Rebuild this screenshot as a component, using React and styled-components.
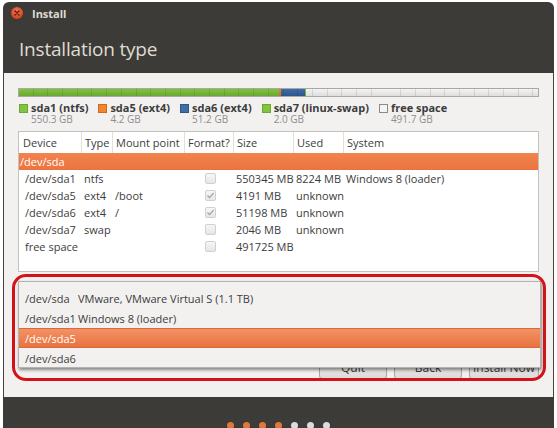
import React from "react";
import styled, { createGlobalStyle } from "styled-components";

const GlobalStyle = createGlobalStyle`
  html, body {
    margin: 0;
    padding: 0;
    background: #ffffff;
  }
  body {
    font-family: "Open Sans", "DejaVu Sans", sans-serif;
    color: #3c3c3c;
  }
`;

const segments = [
  { name: "sda1 (ntfs)", size: "550.3 GB", gb: 550.3, color: "#82c341", edge: "#6aa832" },
  { name: "sda5 (ext4)", size: "4.2 GB", gb: 4.2, color: "#f0852d", edge: "#d06a1a" },
  { name: "sda6 (ext4)", size: "51.2 GB", gb: 51.2, color: "#3f6ea8", edge: "#2d568a" },
  { name: "sda7 (linux-swap)", size: "2.0 GB", gb: 2.0, color: "#82c341", edge: "#6aa832" },
  { name: "free space", size: "491.7 GB", gb: 491.7, color: "#f4f4f4", edge: "#8a8a8a", free: true },
];

const columns = ["Device", "Type", "Mount point", "Format?", "Size", "Used", "System"];

const partitions = [
  { dev: "/dev/sda1", type: "ntfs", mount: "", format: false, size: "550345 MB", used: "8224 MB", system: "Windows 8 (loader)" },
  { dev: "/dev/sda5", type: "ext4", mount: "/boot", format: true, size: "4191 MB", used: "unknown", system: "" },
  { dev: "/dev/sda6", type: "ext4", mount: "/", format: true, size: "51198 MB", used: "unknown", system: "" },
  { dev: "/dev/sda7", type: "swap", mount: "", format: false, size: "2046 MB", used: "unknown", system: "" },
  { dev: "free space", type: "", mount: "", format: false, size: "491725 MB", used: "", system: "" },
];

const bootDevices = [
  { dev: "/dev/sda", label: "VMware, VMware Virtual S (1.1 TB)" },
  { dev: "/dev/sda1", label: "Windows 8 (loader)" },
  { dev: "/dev/sda5", label: "", selected: true },
  { dev: "/dev/sda6", label: "" },
];

const Window = styled.div`
  position: relative;
  width: 551px;
  height: 426px;
  margin: 2px 0 0 3px;
  overflow: hidden;
  display: flex;
  flex-direction: column;
  background: #f2f1f0;
  border-radius: 6px 6px 0 0;
`;

const Header = styled.header`
  height: 71px;
  flex: none;
  background: #3c3b37;
  padding-left: 8px;
  box-sizing: border-box;
`;

const TitleRow = styled.div`
  height: 22px;
  display: flex;
  align-items: center;
  gap: 9px;
`;

const CloseButton = styled.span`
  width: 12px;
  height: 12px;
  border-radius: 50%;
  background: radial-gradient(circle at 50% 35%, #f27a52, #d9431f 70%);
  display: flex;
  align-items: center;
  justify-content: center;
`;

const TitleText = styled.span`
  font-size: 11px;
  font-weight: 700;
  color: #dfdbd2;
`;

const Heading = styled.h1`
  margin: 11px 0 0 8px;
  font-size: 19px;
  line-height: 28px;
  letter-spacing: -0.2px;
  font-weight: 400;
  color: #dfdbd2;
`;

const Content = styled.main`
  flex: 1;
  display: flex;
  flex-direction: column;
  padding: 15px 14px 18px 14px;
  border-left: 1px solid #45443f;
  border-right: 1px solid #45443f;
`;

const Bar = styled.div`
  position: relative;
  height: 9px;
  flex: none;
  display: flex;
  border: 1px solid #a8a8a4;
  box-sizing: border-box;
  &::after {
    content: "";
    position: absolute;
    inset: 0;
    background: repeating-linear-gradient(
      to right,
      transparent 0 13.7px,
      rgba(0, 0, 0, 0.1) 13.7px 14.7px
    );
  }
`;

const Segment = styled.div`
  flex: ${(p) => p.$grow} 1 0;
  background: ${(p) =>
    p.$free
      ? "linear-gradient(#f4f4f4, #dedede)"
      : `linear-gradient(${p.$color}, ${p.$edge})`};
`;

const Legend = styled.div`
  display: flex;
  gap: 10px;
  margin-top: 4px;
  padding-left: 1px;
`;

const LegendItem = styled.div`
  display: flex;
  gap: 3px;
`;

const Swatch = styled.span`
  width: 9px;
  height: 9px;
  margin-top: 3px;
  box-sizing: border-box;
  background: ${(p) => p.$color};
  border: 1px solid ${(p) => p.$edge};
`;

const LegendName = styled.div`
  font-size: 11px;
  line-height: 13px;
  font-weight: 700;
  color: #3c3c3c;
`;

const LegendSize = styled.div`
  font-size: 10px;
  line-height: 10px;
  color: #8e8e8e;
`;

const Table = styled.div`
  margin-top: 7px;
  height: 141px;
  flex: none;
  background: #ffffff;
  border: 1px solid #c4c2be;
  box-sizing: border-box;
  font-size: 11px;
`;

const Grid = styled.div`
  display: grid;
  grid-template-columns: 63px 31px 72px 49px 60px 50px 1fr;
  align-items: center;
`;

const HeadRow = styled(Grid)`
  height: 21px;
`;

const HeadCell = styled.div`
  height: 100%;
  display: flex;
  align-items: center;
  padding-left: ${(p) => (p.$first ? 4 : 3)}px;
  border-right: ${(p) => (p.$last ? "none" : "1px solid #e2e0dd")};
  box-sizing: border-box;
`;

const DiskRow = styled.div`
  height: 17px;
  display: flex;
  align-items: center;
  padding-left: 1px;
  color: #ffffff;
  background: linear-gradient(#f2844f, #ec733e);
`;

const Row = styled(Grid)`
  height: 17px;
`;

const Cell = styled.div`
  padding-left: ${(p) => (p.$indent ? 6 : 2)}px;
  white-space: nowrap;
  display: flex;
  justify-content: ${(p) => (p.$center ? "center" : "flex-start")};
`;

const CheckBox = styled.span`
  width: 11px;
  height: 11px;
  border: 1px solid #d2d0cc;
  border-radius: 2px;
  background: linear-gradient(#f7f7f7, #e7e6e4);
  box-sizing: border-box;
  display: flex;
  align-items: center;
  justify-content: center;
`;

const ButtonRow = styled.div`
  display: flex;
  justify-content: flex-end;
  gap: 7px;
  margin-top: auto;
`;

const DialogButton = styled.button`
  width: ${(p) => p.$w}px;
  height: 24px;
  padding: 0;
  white-space: nowrap;
  font: inherit;
  font-size: 12px;
  color: #3c3c3c;
  border: 1px solid #a9a7a3;
  border-radius: 3px;
  background: linear-gradient(#f6f6f5, #dcdbd9);
`;

const Footer = styled.footer`
  height: 31px;
  flex: none;
  background: #3c3b37;
  display: flex;
  justify-content: center;
  gap: 9px;
  padding-top: 25px;
  box-sizing: border-box;
`;

const Dot = styled.span`
  width: 7px;
  height: 7px;
  flex: none;
  border-radius: 50%;
  background: ${(p) => (p.$done ? "#e2773f" : "#dcdcdc")};
`;

const Popup = styled.div`
  position: absolute;
  left: 15px;
  top: 279px;
  width: 523px;
  height: 87px;
  box-sizing: border-box;
  padding-top: 6px;
  background: #f2f1f0;
  border: 1px solid #b5b3af;
  box-shadow: 1px 2px 3px rgba(0, 0, 0, 0.45);
  font-size: 11px;
  z-index: 2;
`;

const PopupItem = styled.div`
  height: 20px;
  display: grid;
  grid-template-columns: 53px 1fr;
  align-items: center;
  padding-left: 6px;
  box-sizing: border-box;
  color: ${(p) => (p.$selected ? "#ffffff" : "#3c3c3c")};
  background: ${(p) =>
    p.$selected ? "linear-gradient(#f39265, #e9723f)" : "transparent"};
  border-top: 1px solid ${(p) => (p.$selected ? "#d9693a" : "transparent")};
  border-bottom: 1px solid ${(p) => (p.$selected ? "#d9693a" : "transparent")};
`;

const Highlight = styled.div`
  position: absolute;
  left: 9px;
  top: 272px;
  width: 534px;
  height: 107px;
  box-sizing: border-box;
  border: 3px solid #d3121a;
  border-radius: 14px;
  pointer-events: none;
  z-index: 3;
`;

const totalGb = segments.reduce((sum, s) => sum + s.gb, 0);

export default function App() {
  return (
    <>
      <GlobalStyle />
      <Window>
        <Header>
          <TitleRow>
            <CloseButton>
              <svg width="6" height="6" viewBox="0 0 6 6">
                <path d="M1 1L5 5M5 1L1 5" stroke="#5a1a0c" strokeWidth="1.3" strokeLinecap="round" />
              </svg>
            </CloseButton>
            <TitleText>Install</TitleText>
          </TitleRow>
          <Heading>Installation type</Heading>
        </Header>

        <Content>
          <Bar>
            {segments.map((s) => (
              <Segment
                key={s.name}
                $grow={s.gb / totalGb}
                $color={s.color}
                $edge={s.edge}
                $free={s.free}
              />
            ))}
          </Bar>

          <Legend>
            {segments.map((s) => (
              <LegendItem key={s.name}>
                <Swatch $color={s.color} $edge={s.edge} />
                <div>
                  <LegendName>{s.name}</LegendName>
                  <LegendSize>{s.size}</LegendSize>
                </div>
              </LegendItem>
            ))}
          </Legend>

          <Table>
            <HeadRow>
              {columns.map((c, i) => (
                <HeadCell key={c} $first={i === 0} $last={i === columns.length - 1}>
                  {c}
                </HeadCell>
              ))}
            </HeadRow>
            <DiskRow>/dev/sda</DiskRow>
            {partitions.map((p) => (
              <Row key={p.dev}>
                <Cell $indent>{p.dev}</Cell>
                <Cell>{p.type}</Cell>
                <Cell>{p.mount}</Cell>
                <Cell $center>
                  <CheckBox>
                    {p.format && (
                      <svg width="9" height="9" viewBox="0 0 9 9">
                        <path d="M1.5 4.5L3.6 6.6L7.6 2" fill="none" stroke="#a3a29f" strokeWidth="1.2" />
                      </svg>
                    )}
                  </CheckBox>
                </Cell>
                <Cell>{p.size}</Cell>
                <Cell>{p.used}</Cell>
                <Cell>{p.system}</Cell>
              </Row>
            ))}
          </Table>

          <ButtonRow>
            <DialogButton $w={68}>Quit</DialogButton>
            <DialogButton $w={68}>Back</DialogButton>
            <DialogButton $w={70}>Install Now</DialogButton>
          </ButtonRow>
        </Content>

        <Footer>
          {[0, 1, 2, 3, 4, 5, 6].map((i) => (
            <Dot key={i} $done={i < 4} />
          ))}
        </Footer>

        <Popup>
          {bootDevices.map((d) => (
            <PopupItem key={d.dev} $selected={d.selected}>
              <span>{d.dev}</span>
              <span>{d.label}</span>
            </PopupItem>
          ))}
        </Popup>

        <Highlight />
      </Window>
    </>
  );
}
